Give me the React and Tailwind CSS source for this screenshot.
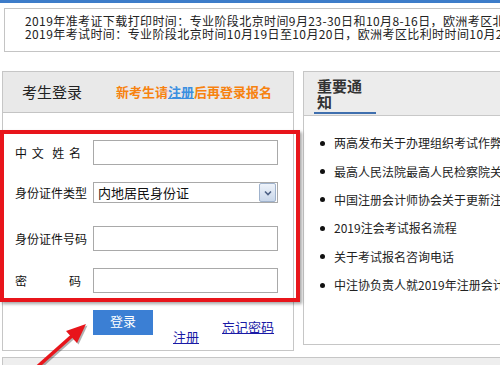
import React from 'react'

const notices = [
  '两高发布关于办理组织考试作弊等刑事案件适用法律若干问题的解释',
  '最高人民法院最高人民检察院关于办理组织考试作弊等刑事案件',
  '中国注册会计师协会关于更新注册会计师全国统一考试报名系统',
  '2019注会考试报名流程',
  '关于考试报名咨询电话',
  '中注协负责人就2019年注册会计师全国统一考试答记者问',
]

export default function App() {
  return (
    <div
      className="relative w-[500px] h-[365px] overflow-hidden bg-white text-[#222]"
      style={{ fontFamily: '"Noto Sans CJK SC", "Noto Sans", sans-serif' }}
    >
      {/* top bar */}
      <div className="h-[3px] bg-[#3d7cc9]" />

      {/* exam notice */}
      <div className="mt-[5px] ml-[4px] w-[540px] h-[44px] border border-[#c4c4c4] pl-[20px] pt-[5px] text-[12px] leading-[13px] tracking-[0.4px] whitespace-nowrap overflow-hidden">
        <div>2019年准考证下载打印时间：专业阶段北京时间9月23-30日和10月8-16日，欧洲考区北京时</div>
        <div>2019年考试时间：专业阶段北京时间10月19日至10月20日，欧洲考区比利时时间10月26日至</div>
      </div>

      <div className="flex items-start mt-[19px] ml-[2px]">
        {/* login panel */}
        <div className="w-[292px] h-[280px] shrink-0 border border-[#c6c6c6]">
          <div className="h-[41px] bg-[#e9e9e9] border-b border-[#c4c4c4] flex items-center">
            <span className="ml-[19px] text-[15px] text-[#222]">考生登录</span>
            <span className="ml-[34px] text-[13px] font-bold text-[#f7820f]">
              新考生请<span className="text-[#3b8fe0] underline">注册</span>后再登录报名
            </span>
          </div>

          <div className="flex flex-col text-[12px] text-[#111]">
            <div className="flex items-center h-[25px] mt-[27px]">
              <span className="w-[90px] shrink-0 pl-[12px] pr-[12px] flex justify-between whitespace-nowrap">
                <span>中</span><span>文</span><span className="ml-[4px]">姓</span><span>名</span>
              </span>
              <div className="w-[185px] shrink-0 h-[25px] border border-[#a9a9a9] bg-white" />
            </div>

            <div className="flex items-center h-[21px] mt-[17px]">
              <span className="w-[90px] shrink-0 pl-[12px] whitespace-nowrap">身份证件类型</span>
              <div className="w-[185px] shrink-0 h-[21px] border border-[#a9a9a9] bg-white flex items-center justify-between">
                <span className="ml-[4px] text-[13px]">内地居民身份证</span>
                <span className="w-[17px] h-[19px] mr-[1px] border border-[#9fb2cc] rounded-[2px] bg-gradient-to-b from-[#eef3fa] to-[#c9d7ea] flex items-center justify-center">
                  <svg width="8" height="6" viewBox="0 0 8 6">
                    <path d="M1 1.5 L4 4.5 L7 1.5" fill="none" stroke="#4d6185" strokeWidth="1.6" />
                  </svg>
                </span>
              </div>
            </div>

            <div className="flex items-center h-[25px] mt-[23px]">
              <span className="w-[90px] shrink-0 pl-[12px] whitespace-nowrap">身份证件号码</span>
              <div className="w-[185px] shrink-0 h-[25px] border border-[#a9a9a9] bg-white" />
            </div>

            <div className="flex items-center h-[25px] mt-[17px]">
              <span className="w-[90px] shrink-0 pl-[12px] pr-[12px] flex justify-between whitespace-nowrap">
                <span>密</span><span>码</span>
              </span>
              <div className="w-[185px] shrink-0 h-[25px] border border-[#a9a9a9] bg-white" />
            </div>

            <div className="flex items-start mt-[17px] text-[13px] leading-[15px]">
              <button className="ml-[90px] w-[60px] h-[25px] bg-[#3b7fd4] text-white text-[13px] pb-[4px]">登录</button>
              <a className="ml-[20px] mt-[19px] text-[#1a1aa6] underline">注册</a>
              <a className="ml-[23px] mt-[9px] text-[#1a1aa6] underline">忘记密码</a>
            </div>
          </div>
        </div>

        {/* notices panel */}
        <div className="ml-[9px] w-[240px] h-[274px] shrink-0 border border-[#c6c6c6] overflow-hidden">
          <div className="h-[44px] bg-[#ececec] border-b border-[#c8c8c8] pl-[10px] pt-[6px]">
            <div className="w-[62px] pl-[3px] text-[15px] leading-[16px] font-bold text-[#333] border-b-2 border-[#3f6fae] pb-[2px]">
              重要通知
            </div>
          </div>
          <ul className="mt-[13px] text-[12px] text-[#222] whitespace-nowrap">
            {notices.map((n) => (
              <li key={n} className="h-[28.4px] flex items-center">
                <span className="ml-[16px] w-[5px] h-[5px] shrink-0 rounded-full bg-[#111]" />
                <span className="ml-[9px]">{n}</span>
              </li>
            ))}
          </ul>
        </div>
      </div>

      {/* next panel */}
      <div className="mt-[6px] ml-[2px] h-[20px] bg-[#eeeeee] border-t border-l border-[#c6c6c6]" />

      {/* red annotation box */}
      <div className="absolute left-0 top-[130px] w-[300px] h-[172px] border-4 border-[#e8151b] shadow-[2px_2px_3px_rgba(0,0,0,0.35)]" />

      {/* red arrow */}
      <svg className="absolute left-0 top-[310px]" width="110" height="55" viewBox="0 310 110 55">
        <g transform="translate(1.5,1.5)" opacity="0.3">
          <line x1="36" y1="368" x2="73" y2="335" stroke="#000" strokeWidth="3.5" />
          <polygon points="86,324 77,343 66,331" fill="#000" />
        </g>
        <line x1="36" y1="368" x2="73" y2="335" stroke="#e8151b" strokeWidth="3.5" />
        <polygon points="86,324 77,343 66,331" fill="#e8151b" />
      </svg>
    </div>
  )
}
